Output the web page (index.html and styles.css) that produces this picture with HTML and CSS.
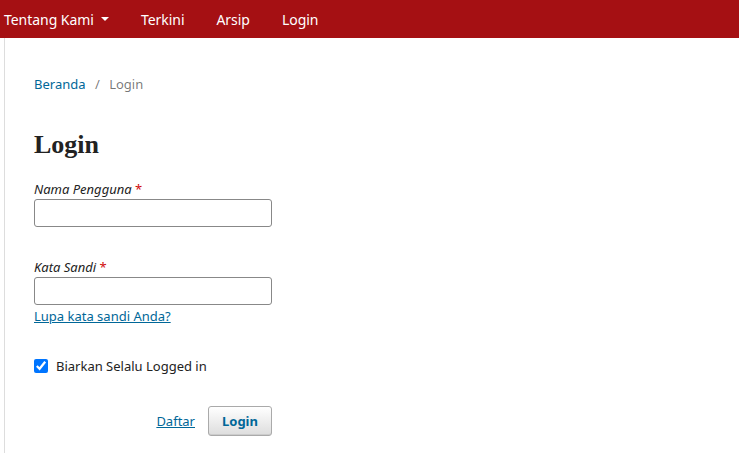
FILE: index.html
```html
<!DOCTYPE html>
<html lang="id">
<head>
    <meta charset="UTF-8">
    <meta name="viewport" content="width=device-width, initial-scale=1.0">
    <title>Login</title>
    <link rel="stylesheet" href="styles.css">
</head>
<body>

<div class="topbar">
    <ul class="nav">
        <li><a href="#">Tentang Kami <span class="caret"></span></a></li>
        <li><a href="#">Terkini</a></li>
        <li><a href="#">Arsip</a></li>
        <li><a href="#">Login</a></li>
    </ul>
</div>

<div class="main">
    <div class="crumbs">
        <a href="#">Beranda</a>
        <span class="sep">/</span>
        <span class="here">Login</span>
    </div>

    <h1>Login</h1>

    <form class="login">
        <label class="field">
            <span class="lbl">Nama Pengguna <span class="req">*</span></span>
            <input type="text">
        </label>

        <label class="field">
            <span class="lbl">Kata Sandi <span class="req">*</span></span>
            <input type="password">
        </label>
        <a class="forgot" href="#">Lupa kata sandi Anda?</a>

        <label class="remember">
            <input type="checkbox" checked>
            <span>Biarkan Selalu Logged in</span>
        </label>

        <div class="buttons">
            <a class="register" href="#">Daftar</a>
            <button type="button" class="submit">Login</button>
        </div>
    </form>
</div>

</body>
</html>
```

FILE: styles.css
```css
html,
body {
    margin: 0;
    background: #fff;
    color: rgba(0, 0, 0, 0.87);
    font-family: "Noto Sans", "Open Sans", sans-serif;
    font-size: 14px;
}

a {
    color: #006798;
}

/* menu atas */
.topbar {
    background: #a51013;
    height: 38px;
}
.nav {
    list-style: none;
    margin: 0;
    padding: 0 0 0 4px;
    display: flex;
    gap: 32px;
    height: 100%;
    align-items: center;
}
.nav a {
    color: #fff;
    text-decoration: none;
    font-size: 14px;
    letter-spacing: -0.04px;
    display: flex;
    align-items: center;
}
.caret {
    display: inline-block;
    margin-left: 7px;
    border-top: 4px solid #fff;
    border-left: 4px solid transparent;
    border-right: 4px solid transparent;
}

/* isi halaman */
.main {
    box-sizing: border-box;
    margin-left: 4px;
    border-left: 1px solid #ddd;
    padding: 36px 0 10px 29px;
    min-height: 415px;
}
.crumbs {
    line-height: 20px;
    font-size: 13px;
    color: rgba(0, 0, 0, 0.54);
}
.crumbs a {
    text-decoration: none;
}
.crumbs .sep {
    margin: 0 6px;
}

h1 {
    font-family: "Liberation Serif", "DejaVu Serif", serif;
    font-weight: bold;
    font-size: 26px;
    line-height: 30px;
    margin: 36px 0 19px;
    color: #222;
}

.login {
    width: 238px;
    display: flex;
    flex-direction: column;
}
.field {
    display: flex;
    flex-direction: column;
    margin-bottom: 30px;
}
.field + .field {
    margin-bottom: 0;
}
.lbl {
    font-style: italic;
    font-size: 13px;
    line-height: 20px;
    color: #222;
}
.req {
    color: #d00a0a;
    font-style: normal;
}
.field input {
    box-sizing: border-box;
    height: 28px;
    width: 238px;
    margin: 0;
    border: 1px solid #888;
    border-radius: 3px;
    font: inherit;
}
.forgot {
    line-height: 20px;
    font-size: 13px;
    margin-top: 1px;
}

.remember {
    display: flex;
    align-items: center;
    gap: 8px;
    line-height: 20px;
    font-size: 13px;
    margin-top: 30px;
    color: #222;
}
.remember input {
    margin: 0;
    width: 14px;
    height: 14px;
}

.buttons {
    display: flex;
    justify-content: flex-end;
    align-items: center;
    gap: 13px;
    margin-top: 30px;
}
.register {
    font-size: 13px;
}
.submit {
    height: 30px;
    width: 64px;
    border: 1px solid #aaa;
    border-radius: 3px;
    background: linear-gradient(#fff, #ddd);
    color: #006798;
    font-family: inherit;
    font-weight: bold;
    font-size: 13px;
    box-shadow: inset 0 -1px 0 #ccc;
}
```
